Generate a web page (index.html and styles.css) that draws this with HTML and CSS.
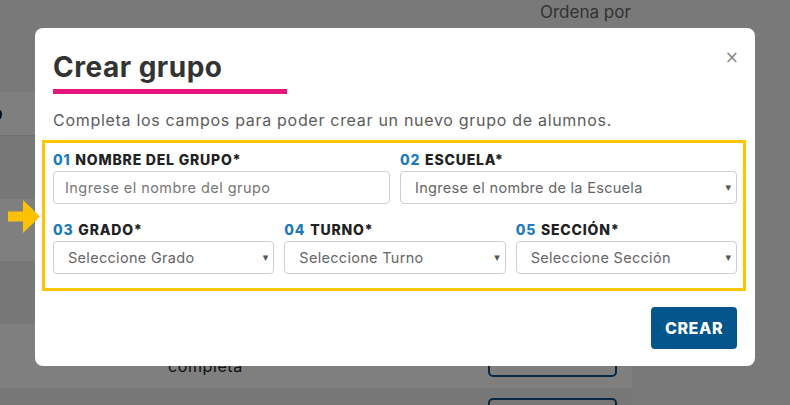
FILE: index.html
```html
<!DOCTYPE html>
<html lang="es">
<head>
<meta charset="utf-8">
<title>Crear grupo</title>
<link rel="stylesheet" href="styles.css">
</head>
<body>
<div class="page">
  <div class="topbar"><span class="sort">Ordena por</span></div>
  <div class="table">
    <div class="row head"><span class="cell-b">o</span></div>
    <div class="row alt"><span class="cell">o</span></div>
    <div class="row"><span class="cell">o</span></div>
    <div class="row alt"></div>
    <div class="row tall"><span class="cell"></span><span class="txt">completa</span><span class="obtn first"></span></div>
    <div class="row alt tall"><span class="cell"></span><span class="txt"></span><span class="obtn second"></span></div>
  </div>
</div>

<div class="overlay">
  <div class="modal">
    <button class="close" aria-label="Cerrar">×</button>
    <h1 class="title">Crear grupo</h1>
    <div class="bar"></div>
    <p class="lead">Completa los campos para poder crear un nuevo grupo de alumnos.</p>
    <div class="fields">
      <div class="row2">
        <div class="field">
          <label><span class="num">01</span> NOMBRE DEL GRUPO*</label>
          <div class="input">Ingrese el nombre del grupo</div>
        </div>
        <div class="field">
          <label><span class="num">02</span> ESCUELA*</label>
          <div class="input select">Ingrese el nombre de la Escuela<span class="caret">▾</span></div>
        </div>
      </div>
      <div class="row3">
        <div class="field">
          <label><span class="num">03</span> GRADO*</label>
          <div class="input select">Seleccione Grado<span class="caret">▾</span></div>
        </div>
        <div class="field">
          <label><span class="num">04</span> TURNO*</label>
          <div class="input select">Seleccione Turno<span class="caret">▾</span></div>
        </div>
        <div class="field">
          <label><span class="num">05</span> SECCIÓN*</label>
          <div class="input select">Seleccione Sección<span class="caret">▾</span></div>
        </div>
      </div>
    </div>
    <div class="actions"><button class="crear">CREAR</button></div>
  </div>
  <svg class="pointer" width="32" height="33" viewBox="0 0 32 33"><path d="M0 11.5h15V0l17 16.5L15 33V21.5H0z" fill="#fcc100"/></svg>
</div>
</body>
</html>
```

FILE: styles.css
```css
html, body {
  margin: 0;
  padding: 0;
}
body {
  width: 790px;
  height: 405px;
  overflow: hidden;
  background: #f3f3f3;
  font-family: Inter, "DejaVu Sans", sans-serif;
  position: relative;
}
.page {
  width: 790px;
  height: 405px;
  overflow: hidden;
}
.topbar {
  height: 92px;
  display: flex;
  padding-left: 540px;
  box-sizing: border-box;
}
.sort {
  color: #666;
  font-size: 17px;
  line-height: 24px;
}
.table {
  width: 632px;
  display: flex;
  flex-direction: column;
}
.row {
  height: 62px;
  background: #fff;
  display: flex;
  align-items: center;
  flex: none;
}
.row.head {
  height: 43px;
  border-bottom: 1px solid #e0e0e0;
}
.row.alt { background: #efefef; height: 63px; }
.row.tall { height: 64px; }
.cell-b, .cell {
  width: 20px;
  margin-left: -9px;
  color: #111;
  font-size: 16px;
}
.cell-b { font-weight: 700; font-size: 19px; }
.txt {
  margin-left: 157px;
  width: 300px;
  color: #222;
  font-size: 16px;
  letter-spacing: 0.6px;
  align-self: flex-end;
  padding-bottom: 12px;
}
.obtn {
  margin-left: 20px;
  width: 129px;
  height: 36px;
  border: 2px solid #134f80;
  border-radius: 5px;
  box-sizing: border-box;
  align-self: flex-start;
}
.obtn.first { margin-top: 17px; }
.obtn.second { margin-top: 10px; }
.overlay {
  position: absolute;
  inset: 0;
  background: rgba(0, 0, 0, 0.5);
  display: flex;
  justify-content: center;
  align-items: flex-start;
  padding-top: 28px;
}
.pointer {
  position: absolute;
  left: 8px;
  top: 200px;
  z-index: 2;
}
.modal {
  position: relative;
  width: 720px;
  height: 338px;
  background: #fff;
  border-radius: 8px;
  box-sizing: border-box;
  padding: 20px 9px 0 7px;
  display: flex;
  flex-direction: column;
}
.close {
  position: absolute;
  right: 16px;
  top: 19px;
  border: 0;
  background: none;
  color: #8a8a8a;
  font-size: 17px;
  padding: 0;
  font-family: "DejaVu Sans", sans-serif;
  line-height: 20px;
}
.title {
  margin: 0 0 0 11px;
  font-size: 28px;
  font-weight: 700;
  letter-spacing: 0.5px;
  color: #333;
  line-height: 38px;
}
.bar {
  margin: 3px 0 0 11px;
  width: 234px;
  height: 5px;
  background: #e6167f;
}
.lead {
  margin: 14px 0 0 11px;
  font-size: 16px;
  letter-spacing: 0.7px;
  color: #5c5c5c;
  line-height: 24px;
}
.fields {
  margin-top: 8px;
  border: 3px solid #fec602;
  height: 151px;
  box-sizing: border-box;
  padding: 8px 6px 0 8px;
  display: flex;
  flex-direction: column;
  gap: 17px;
}
.row2 {
  display: grid;
  grid-template-columns: 1fr 1fr;
  gap: 10px;
}
.row3 {
  display: grid;
  grid-template-columns: 1fr 1fr 1fr;
  gap: 10px;
}
.field {
  display: flex;
  flex-direction: column;
  gap: 2px;
}
label {
  font-size: 14px;
  font-weight: 800;
  letter-spacing: 0.8px;
  color: #222;
  line-height: 18px;
}
.num { color: #1c7bc0; margin-right: 1px; }
.input {
  height: 33px;
  border: 1px solid #cfcfcf;
  border-radius: 4px;
  box-sizing: border-box;
  padding: 0 11px;
  display: flex;
  align-items: center;
  font-size: 14.5px;
  letter-spacing: 0.45px;
  color: #777;
  position: relative;
}
.select { padding-left: 14px; color: #666; letter-spacing: 0.3px; }
.caret {
  position: absolute;
  right: 5px;
  top: 8px;
  font-size: 11px;
  color: #555;
  letter-spacing: 0;
}
.actions {
  display: flex;
  justify-content: flex-end;
  margin-top: 16px;
  margin-right: 9px;
}
.crear {
  width: 86px;
  height: 42px;
  background: #03568c;
  color: #fff;
  border: 0;
  border-radius: 4px;
  font-family: Inter, "DejaVu Sans", sans-serif;
  font-weight: 800;
  font-size: 16px;
  letter-spacing: 0.6px;
}
```
